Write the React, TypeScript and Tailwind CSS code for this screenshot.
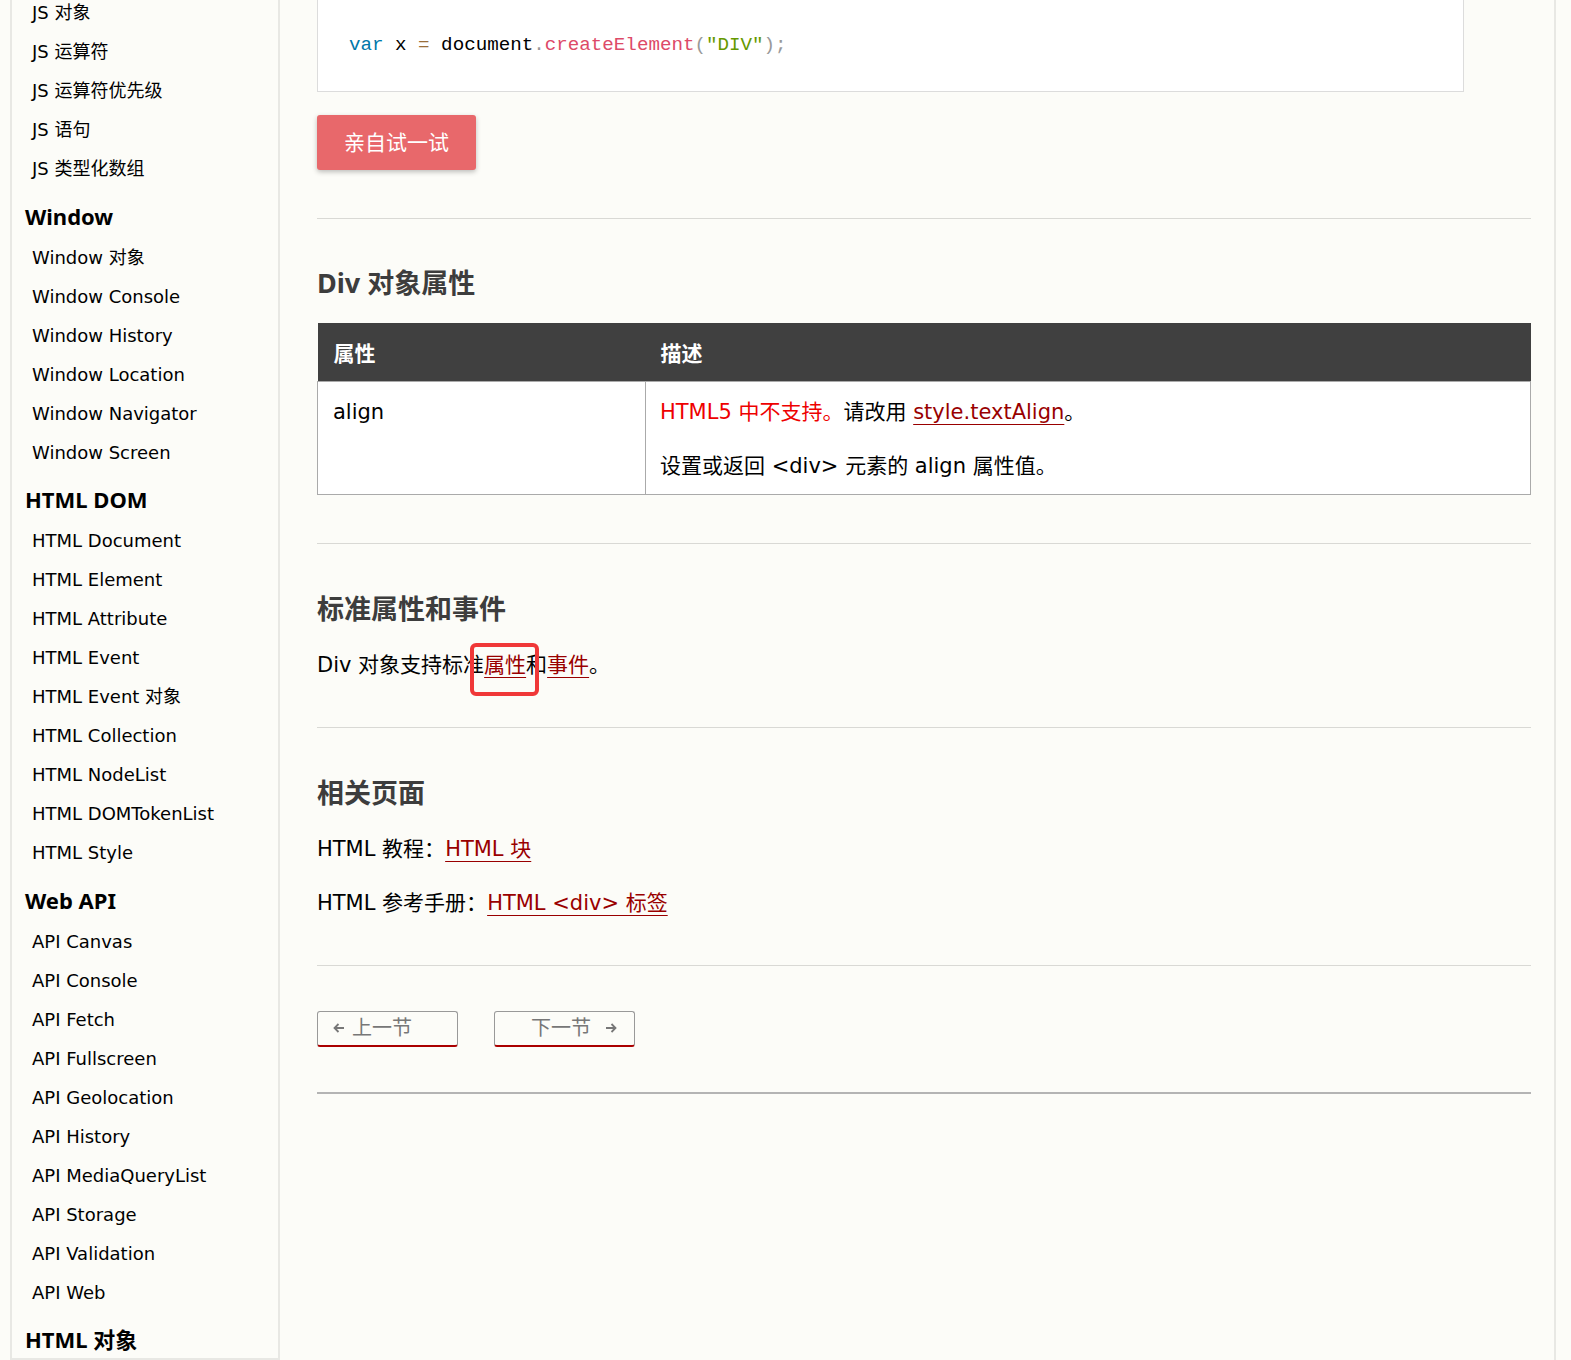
const font = "font-['DejaVu_Sans','Noto_Sans_CJK_SC',sans-serif]"
const headFont = "font-['Noto_Sans','Noto_Sans_CJK_SC',sans-serif]"

type NavGroup = { title?: string; items: string[] }

const groups: NavGroup[] = [
  { items: ["JS 对象", "JS 运算符", "JS 运算符优先级", "JS 语句", "JS 类型化数组"] },
  {
    title: "Window",
    items: [
      "Window 对象",
      "Window Console",
      "Window History",
      "Window Location",
      "Window Navigator",
      "Window Screen",
    ],
  },
  {
    title: "HTML DOM",
    items: [
      "HTML Document",
      "HTML Element",
      "HTML Attribute",
      "HTML Event",
      "HTML Event 对象",
      "HTML Collection",
      "HTML NodeList",
      "HTML DOMTokenList",
      "HTML Style",
    ],
  },
  {
    title: "Web API",
    items: [
      "API Canvas",
      "API Console",
      "API Fetch",
      "API Fullscreen",
      "API Geolocation",
      "API History",
      "API MediaQueryList",
      "API Storage",
      "API Validation",
      "API Web",
    ],
  },
  { title: "HTML 对象", items: [] },
]

function Sidebar() {
  return (
    <aside className="ml-[10px] w-[270px] shrink-0 border-x-2 border-b-2 border-[#e8e8e4] h-[1360px] overflow-hidden">
      <div className="-mt-[7px]">
        {groups.map((g, i) => (
          <div key={i}>
            {g.title && (
              <h3
                className={`mt-[7px] flex h-[42.5px] items-center pl-[13px] text-[22px] font-bold text-black ${headFont}`}
              >
                {g.title}
              </h3>
            )}
            {g.items.map((item) => (
              <a
                key={item}
                href="#"
                className="flex h-[39px] items-center pl-[20px] text-[18px] text-black"
              >
                {item}
              </a>
            ))}
          </div>
        ))}
      </div>
    </aside>
  )
}

function Hr() {
  return <hr className="border-0 border-t border-[#d9d9d5]" />
}

function H2({ children }: { children: React.ReactNode }) {
  return (
    <h2 className={`flex h-[40px] items-center text-[27px] font-bold text-[#3d3d3d] ${headFont}`}>
      {children}
    </h2>
  )
}

const link = "text-[#990000] underline underline-offset-[5px] decoration-1"

function PrevArrow() {
  return (
    <svg width="12" height="12" viewBox="0 0 12 12" fill="none" stroke="currentColor" strokeWidth="1.8">
      <path d="M11 6H1.5M5.5 2 1.5 6l4 4" />
    </svg>
  )
}

function NextArrow() {
  return (
    <svg width="12" height="12" viewBox="0 0 12 12" fill="none" stroke="currentColor" strokeWidth="1.8">
      <path d="M1 6h9.5M6.5 2l4 4-4 4" />
    </svg>
  )
}

function Main() {
  return (
    <main className="w-[1276px] shrink-0 border-r-2 border-[#e8e8e4] pl-[37px] pr-[23px] text-[21px]">
      <div className="w-[1147px] h-[92px] border border-t-0 border-[#dcdcdc] bg-white pl-[31px] pt-[30px]">
        <pre className="font-['Liberation_Mono',monospace] text-[19.2px] leading-[30px] text-black">
          <span className="text-[#0077aa]">var</span> x <span className="text-[#9a6e3a]">=</span> document
          <span className="text-[#999999]">.</span>
          <span className="text-[#dd4a68]">createElement</span>
          <span className="text-[#999999]">(</span>
          <span className="text-[#669900]">"DIV"</span>
          <span className="text-[#999999]">);</span>
        </pre>
      </div>

      <button className="mt-[23px] flex h-[55px] w-[159px] items-center justify-center rounded-[3px] bg-[#e8686b] pt-[2px] text-[21px] text-white shadow-[0_2px_5px_rgba(0,0,0,0.25)]">
        亲自试一试
      </button>

      <div className="mt-[48px]">
        <Hr />
      </div>

      <div className="mt-[44px]">
        <H2>Div 对象属性</H2>
      </div>

      <table className="mt-[20px] w-full border-collapse">
        <thead>
          <tr className="h-[58px] bg-[#404040] text-white">
            <th className="w-[328px] pl-[16px] pt-[5px] text-left font-bold">属性</th>
            <th className="pl-[15px] pt-[5px] text-left font-bold">描述</th>
          </tr>
        </thead>
        <tbody>
          <tr className="bg-white">
            <td className="h-[113px] border border-[#aaaaaa] pl-[15px] pt-[15px] align-top text-black">align</td>
            <td className="border border-[#aaaaaa] pl-[14px] pt-[15px] align-top text-black">
              <p className="leading-[30px]">
                <span className="text-[#ee0000]">HTML5 中不支持。</span>请改用{" "}
                <a href="#" className={link}>
                  style.textAlign
                </a>
                。
              </p>
              <p className="mt-[24px] leading-[30px]">设置或返回 &lt;div&gt; 元素的 align 属性值。</p>
            </td>
          </tr>
        </tbody>
      </table>

      <div className="mt-[48px]">
        <Hr />
      </div>

      <div className="mt-[46px]">
        <H2>标准属性和事件</H2>
      </div>
      <p className="mt-[20px] leading-[30px] text-black">
        Div 对象支持标准
        <span className="relative">
          <a href="#" className={link}>
            属性
          </a>
          <span className="absolute -left-[14px] -top-[10px] h-[53px] w-[69px] rounded-[6px] border-[4px] border-[#f03838]" />
        </span>
        和
        <a href="#" className={link}>
          事件
        </a>
        。
      </p>

      <div className="mt-[47px]">
        <Hr />
      </div>

      <div className="mt-[46px]">
        <H2>相关页面</H2>
      </div>
      <p className="mt-[20px] leading-[30px] text-black">
        HTML 教程：
        <a href="#" className={link}>
          HTML 块
        </a>
      </p>
      <p className="mt-[24px] leading-[30px] text-black">
        HTML 参考手册：
        <a href="#" className={link}>
          HTML &lt;div&gt; 标签
        </a>
      </p>

      <div className="mt-[47px]">
        <Hr />
      </div>

      <div className="mt-[45px] flex gap-[36px]">
        <a
          href="#"
          className="flex h-[36px] w-[141px] items-center gap-[7px] rounded-[3px] border border-b-2 border-[#999999] border-b-[#aa0000] pl-[15px] text-[20px] text-[#777777]"
        >
          <PrevArrow />
          上一节
        </a>
        <a
          href="#"
          className="flex h-[36px] w-[141px] items-center justify-end gap-[14px] rounded-[3px] border border-b-2 border-[#999999] border-b-[#aa0000] pr-[17px] text-[20px] text-[#777777]"
        >
          下一节
          <NextArrow />
        </a>
      </div>

      <div className="mt-[45px] border-t-2 border-[#b4b4b4]" />
    </main>
  )
}

export default function App() {
  return (
    <div className={`flex h-[1360px] w-[1571px] overflow-hidden bg-[#fcfcf8] ${font}`}>
      <Sidebar />
      <Main />
    </div>
  )
}
